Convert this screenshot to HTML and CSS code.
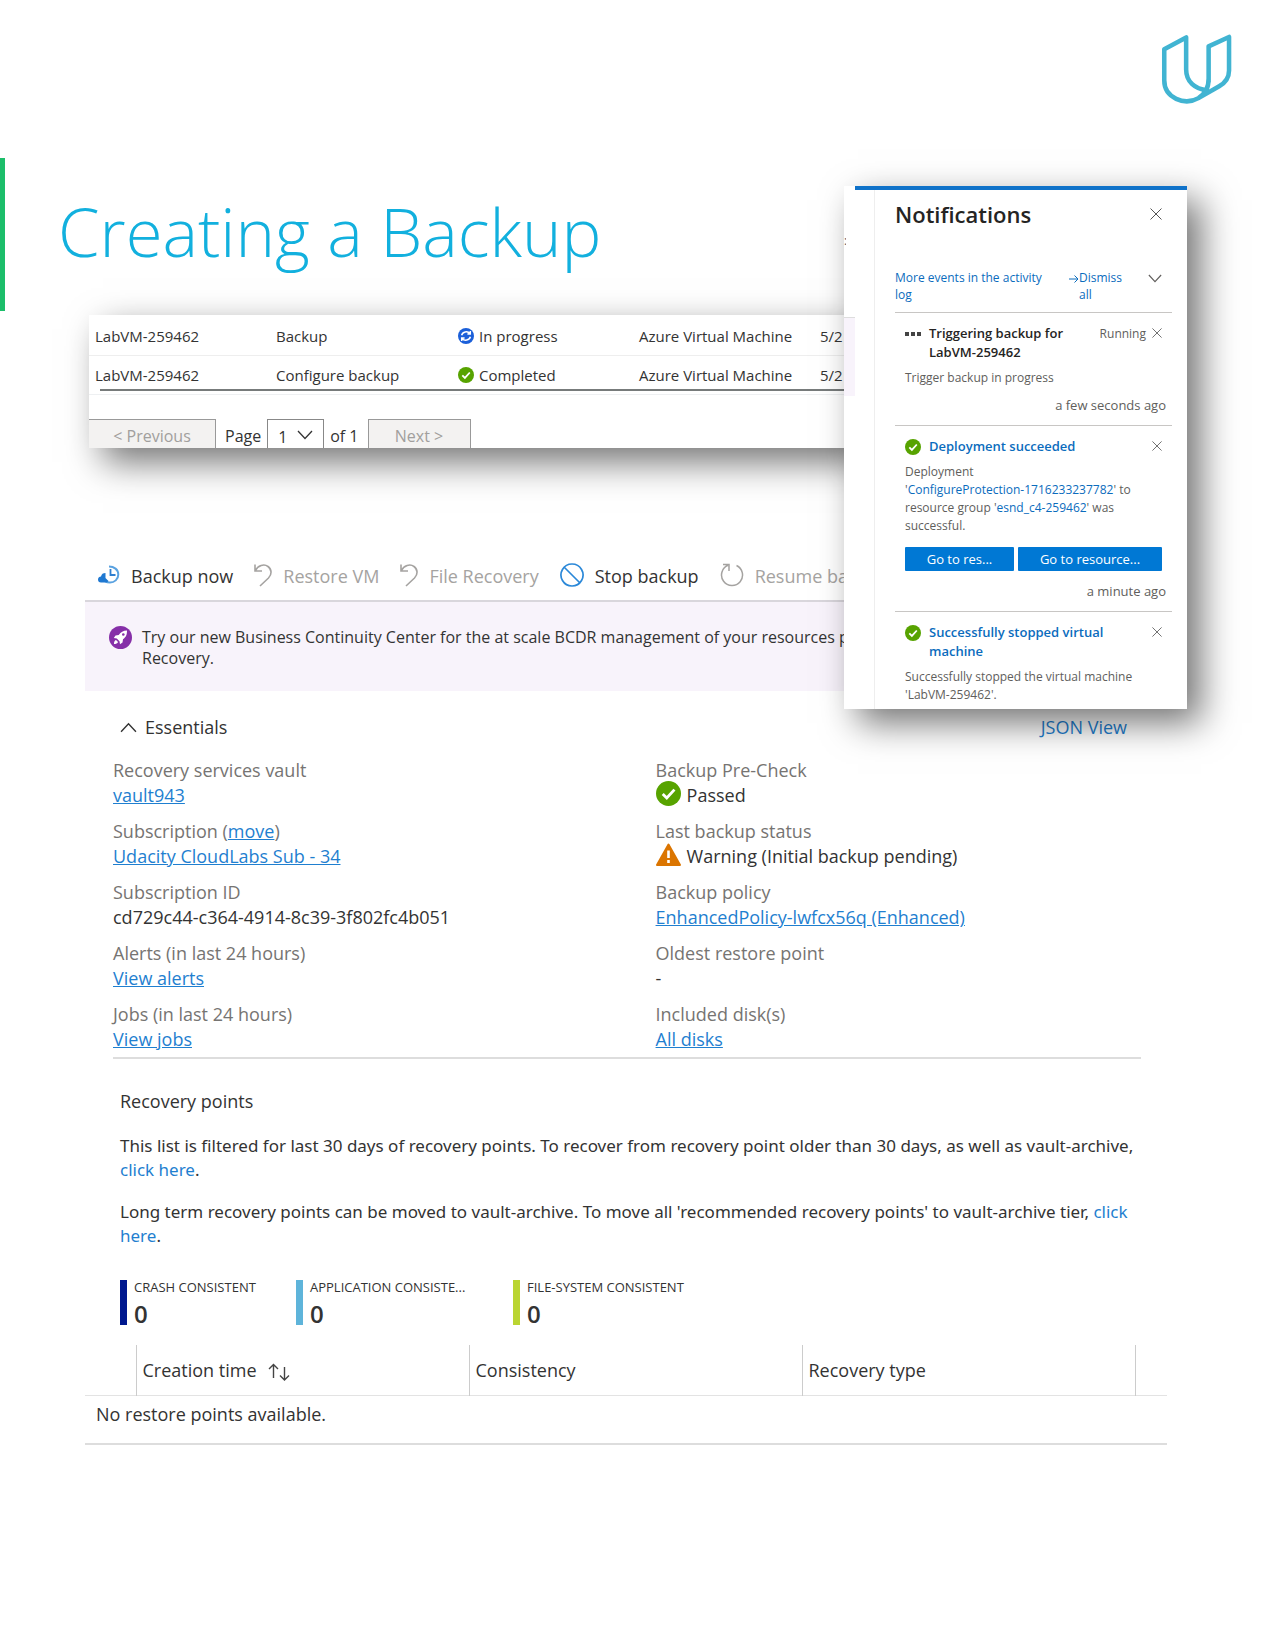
FILE: index.html
```html
<!DOCTYPE html>
<html lang="en">
<head>
<meta charset="utf-8">
<title>Creating a Backup</title>
<meta name="viewport" content="width=device-width, initial-scale=1">
<link rel="stylesheet" href="styles.css">
</head>
<body>
<svg class="sprite" aria-hidden="true">
  <symbol id="check" viewBox="0 0 16 16"><circle cx="8" cy="8" r="8" fill="#57a300"/><path d="M4.3 8.3l2.6 2.6 4.9-5.4" fill="none" stroke="#fff" stroke-width="1.8"/></symbol>
  <symbol id="close" viewBox="0 0 12 12"><path d="M.5.5l11 11M11.5.5l-11 11" fill="none" stroke="currentColor"/></symbol>
  <symbol id="chevron" viewBox="0 0 16 10"><path d="M1 1l7 7.500 7-7.500" fill="none" stroke="currentColor" stroke-width="1.300"/></symbol>
  <symbol id="undo" viewBox="0 0 18 24"><path d="M1 1.500V8h7M1.200 7.800C4 2.500 10 .5 14 3.500c4 3 4 8 .5 11.500L6 23" fill="none" stroke="currentColor" stroke-width="1.600"/></symbol>
</svg>
<div class="page">
  <header class="brand">
    <svg class="logo" viewBox="20 13 72 72" role="img" aria-label="Udacity"><path d="M68.300 62V25.500L89 16V50C89 57 86 62 79 66L58 78C44 86 23.300 78 23.300 60V28.500L45.500 16.500V49C45.500 61 54 69 67 70M68.300 58C68.300 68 65 73 58 78" fill="none" stroke="#41b4d2" stroke-width="4.600" stroke-linejoin="round"/></svg>
  </header>

  <div class="title"><h1>Creating a Backup</h1></div>

  <section class="jobs" aria-label="Backup jobs">
    <table class="jobs-table">
      <tr>
        <td class="c-name">LabVM-259462</td><td class="c-op">Backup</td>
        <td class="c-status"><span class="status"><svg viewBox="0 0 16 16"><circle cx="8" cy="8" r="8" fill="#1b5fd9"/><path d="M3.600 7.200C4.500 3.600 9.500 2.600 12 5.600M12.300 3v3H9.400M12.400 8.800C11.500 12.400 6.500 13.400 4 10.400M3.700 13v-3h2.900" fill="none" stroke="#fff" stroke-width="1.500"/></svg>In progress</span></td>
        <td class="c-type">Azure Virtual Machine</td><td>5/2</td>
      </tr>
      <tr>
        <td>LabVM-259462</td><td>Configure backup</td>
        <td><span class="status"><svg><use href="#check"/></svg>Completed</span></td>
        <td>Azure Virtual Machine</td><td>5/2</td>
      </tr>
    </table>
    <hr class="scroll-line">
    <nav class="pager" aria-label="Pages">
      <button class="pg prev" disabled>&lt; Previous</button>
      <label for="pageno">Page</label>
      <span class="select"><select id="pageno"><option>1</option></select><svg><use href="#chevron"/></svg></span>
      <span class="of">of 1</span>
      <button class="pg next" disabled>Next &gt;</button>
    </nav>
  </section>

  <main class="blade">
    <div class="toolbar">
      <button class="tool"><svg width="23" height="20" viewBox="0 0 23 20"><path d="M12 1.500c5 0 9.300 3 9.300 8 0 5-4 8-8.300 8-2 0-3.500-.4-5-1.400" fill="none" stroke="#5aa2e0" stroke-width="2"/><path d="M13.500 4v6h5" fill="none" stroke="#2f7fd0" stroke-width="1.800"/><path d="M1 14.500c0-2 1.500-3 3-3C4.500 9 6 8 8.500 8v5l3 3c-.5.800-1.500 1.500-3 1.500H4c-2 0-3-1.200-3-3z" fill="#1f78d1"/></svg>Backup now</button>
      <button class="tool" disabled><svg width="18" height="24"><use href="#undo"/></svg>Restore VM</button>
      <button class="tool" disabled><svg width="18" height="24"><use href="#undo"/></svg>File Recovery</button>
      <button class="tool"><svg width="24" height="24" viewBox="0 0 24 24"><path d="M4 4l16 16M12 1a11 11 0 1 0 .01 0z" fill="none" stroke="#2b88d8" stroke-width="1.700"/></svg>Stop backup</button>
      <button class="tool" disabled><svg width="24" height="24" viewBox="0 0 24 24"><path d="M16.500 2.500A10.500 10.500 0 1 1 8 2.300M3 1.500h6V8" fill="none" stroke="currentColor" stroke-width="1.500"/></svg>Resume backup</button>
    </div>

    <div class="banner">
      <svg width="23" height="23" viewBox="0 0 23 23"><circle cx="11.500" cy="11.500" r="11.500" fill="#862fa8"/><path d="M18 4.500c-4 0-6 1.500-8.300 4.500L6.500 9.500 4.800 12l3 .5 2.700 2.700.5 3 2.500-1.700.5-3.200C17 11 18 9 18 4.500zM7 14c-1.500.5-2 2-2 4 2 0 3.500-.5 4-2z" fill="#fff"/><circle cx="14.300" cy="8.500" r="1.300" fill="#862fa8"/></svg>
      <p>Try our new Business Continuity Center for the at scale BCDR management of your resources protected by Azure Backup and Site<br>Recovery.</p>
    </div>

    <section class="essentials">
      <div class="ess-head">
        <button class="toggle" aria-expanded="true"><svg><use href="#chevron"/></svg>Essentials</button>
        <a class="json" href="#json">JSON View</a>
      </div>
      <div class="ess-grid">
        <dl>
          <div><dt>Recovery services vault</dt><dd><a href="#vault">vault943</a></dd></div>
          <div><dt>Subscription (<a href="#move">move</a>)</dt><dd><a href="#sub">Udacity CloudLabs Sub - 34</a></dd></div>
          <div><dt>Subscription ID</dt><dd>cd729c44-c364-4914-8c39-3f802fc4b051</dd></div>
          <div><dt>Alerts (in last 24 hours)</dt><dd><a href="#alerts">View alerts</a></dd></div>
          <div><dt>Jobs (in last 24 hours)</dt><dd><a href="#jobs">View jobs</a></dd></div>
        </dl>
        <dl>
          <div><dt>Backup Pre-Check</dt><dd class="flag"><svg><use href="#check"/></svg>Passed</dd></div>
          <div><dt>Last backup status</dt><dd class="flag"><svg viewBox="0 0 25 25"><path d="M12.500 2.500L24 23H1z" fill="#db7500" stroke="#db7500" stroke-width="2" stroke-linejoin="round"/><path d="M12.500 8.500v7.500M12.500 18v3" stroke="#fff" stroke-width="2.600"/></svg>Warning (Initial backup pending)</dd></div>
          <div><dt>Backup policy</dt><dd><a href="#policy">EnhancedPolicy-lwfcx56q (Enhanced)</a></dd></div>
          <div><dt>Oldest restore point</dt><dd>-</dd></div>
          <div><dt>Included disk(s)</dt><dd><a href="#disks">All disks</a></dd></div>
        </dl>
      </div>
    </section>

    <section class="points">
      <h2>Recovery points</h2>
      <p>This list is filtered for last 30 days of recovery points. To recover from recovery point older than 30 days, as well as vault-archive, <a class="whole" href="#older">click here</a>.</p>
      <p>Long term recovery points can be moved to vault-archive. To move all 'recommended recovery points' to vault-archive tier, <a href="#tier">click here</a>.</p>
      <div class="tiles">
        <div class="tile crash"><span>CRASH CONSISTENT</span><b>0</b></div>
        <div class="tile app"><span>APPLICATION CONSISTE...</span><b>0</b></div>
        <div class="tile file"><span>FILE-SYSTEM CONSISTENT</span><b>0</b></div>
      </div>
    </section>

    <table class="restore">
      <thead><tr>
        <td class="pick"></td>
        <th scope="col">Creation time <svg width="24" height="18" viewBox="0 0 24 18"><path d="M6.500 15V1.500M2 6l4.500-4.500L11 6M17.500 4v13M13 12.500l4.500 4.500 4.500-4.500" fill="none" stroke="#444" stroke-width="1.400"/></svg></th>
        <th scope="col">Consistency</th>
        <th scope="col">Recovery type</th>
        <td class="end"></td>
      </tr></thead>
      <tbody><tr><td colspan="5">No restore points available.</td></tr></tbody>
    </table>
  </main>

  <aside class="notes">
    <div class="under"><span>:</span><i></i></div>
    <div class="panel">
      <div class="panel-head"><h2>Notifications</h2><button class="x big" aria-label="Close"><svg><use href="#close"/></svg></button></div>
      <div class="actions">
        <a class="more" href="#activity">More events in the activity log</a>
        <a class="dismiss" href="#dismiss"><svg width="10" height="8" viewBox="0 0 10 8"><path d="M0 4h9M5.500.5L9 4 5.500 7.500" fill="none" stroke="currentColor"/></svg><span>Dismiss all</span></a>
        <button class="expand" aria-label="Expand"><svg><use href="#chevron"/></svg></button>
      </div>
      <article>
        <div class="note-head"><svg width="16" height="16" viewBox="0 0 16 16"><path d="M0 6h4v4H0zM6 6h4v4H6zM12 6h4v4h-4z" fill="#444"/></svg><h3>Triggering backup for LabVM-259462</h3><span class="state">Running</span><button class="x" aria-label="Dismiss"><svg><use href="#close"/></svg></button></div>
        <p>Trigger backup in progress</p>
        <time>a few seconds ago</time>
      </article>
      <article>
        <div class="note-head"><svg width="16" height="16"><use href="#check"/></svg><h3><a href="#deployment">Deployment succeeded</a></h3><button class="x" aria-label="Dismiss"><svg><use href="#close"/></svg></button></div>
        <p>Deployment<br>'<a href="#protection">ConfigureProtection-1716233237782</a>' to resource group '<a href="#group">esnd_c4-259462</a>' was successful.</p>
        <div class="go"><button>Go to res...</button><button>Go to resource...</button></div>
        <time>a minute ago</time>
      </article>
      <article>
        <div class="note-head"><svg width="16" height="16"><use href="#check"/></svg><h3><a href="#stopped">Successfully stopped virtual machine</a></h3><button class="x" aria-label="Dismiss"><svg><use href="#close"/></svg></button></div>
        <p>Successfully stopped the virtual machine 'LabVM-259462'.</p>
      </article>
    </div>
  </aside>
</div>
</body>
</html>
```
FILE: styles.css
```css
* { box-sizing: border-box; }

body {
  margin: 0;
  background: #fff;
  color: #333;
  font: 16px/24px "Open Sans", "Noto Sans", sans-serif;
}

h1, h2, h3, p, dl, dd { margin: 0; }
a { color: #1f7fd0; text-decoration: none; }
button { padding: 0; border: 0; background: none; color: inherit; font: inherit; }
svg { flex: none; }
table { border-collapse: collapse; }
.sprite { position: absolute; width: 0; height: 0; }

.page { position: relative; padding-bottom: 200px; }

.brand { display: flex; justify-content: flex-end; padding: 34px 43px 0; }
.logo { width: 71px; height: 71px; }

.title {
  margin-top: 53px;
  padding: 33px 0 40px 53px;
  border-left: 5px solid #1cbe6a;
}
.title h1 { color: #12b0de; font-size: 67px; line-height: 80px; font-weight: 300; }

/* jobs list */
.jobs {
  margin: 4px 420px 0 89px;
  overflow: hidden;
  background: #fff;
  box-shadow: 14px 14px 34px rgba(0, 0, 0, .55);
}
.jobs-table { width: 100%; table-layout: fixed; font-size: 15px; line-height: 22px; white-space: nowrap; }
.jobs-table td { padding: 8px 0 3px; }
.jobs-table tr:first-child td { padding-top: 10px; padding-bottom: 8px; border-bottom: 1px solid #eee; }
.jobs-table tr td:first-child { padding-left: 6px; }
.jobs-table .c-name { width: 187px; }
.jobs-table .c-op { width: 182px; }
.jobs-table .c-status { width: 181px; }
.jobs-table .c-type { width: 181px; }
.status { display: flex; align-items: center; gap: 5px; }
.status svg { width: 16px; height: 16px; }
.scroll-line { height: 2px; margin: 0 0 3px 11px; border: 0; background: #777b7b; }
.pager {
  display: flex;
  align-items: flex-start;
  height: 54px;
  padding-top: 24px;
  border-top: 1px solid #eef0f2;
  line-height: 34px;
}
.pg { height: 34px; border: 1px solid #999; background: #f3f2f1; color: #a19f9d; line-height: 30px; }
.prev { width: 127px; border-left: 0; }
.next { width: 103px; margin-left: 9px; }
.pager label { margin: 0 6px 0 9px; }
.select { display: flex; align-items: center; width: 57px; height: 34px; border: 1px solid #888; }
.select select { flex: 1; width: 20px; height: 32px; padding: 0 0 0 10px; border: 0; appearance: none; background: none; color: inherit; font: inherit; }
.select svg { width: 16px; height: 10px; margin: 0 10px 2px 0; }
.of { margin-left: 6px; }

/* vault item blade */
.blade { margin: 102px 108px 0 85px; font-size: 18px; }
.toolbar { display: flex; gap: 21px; height: 50px; padding: 2px 0 0 12px; align-items: center; overflow: hidden; white-space: nowrap; }
.tool { display: flex; align-items: center; gap: 11px; }
.tool:disabled { color: #a5a3a1; }
.tool svg { margin-bottom: 3px; }

.banner {
  display: flex;
  gap: 10px;
  padding: 24px 0 22px 24px;
  border-top: 2px solid #d9d6dc;
  background: #f8f3fb;
  font-size: 16px;
  line-height: 21px;
  white-space: nowrap;
  overflow: hidden;
}
.banner p { margin-top: 1px; }

.essentials { margin: 24px 26px 0 28px; border-bottom: 2px solid #ddd; padding-bottom: 5px; }
.ess-head { display: flex; justify-content: space-between; padding: 0 14px 0 7px; }
.toggle { display: flex; align-items: center; gap: 8px; font-weight: 500; }
.toggle svg { width: 17px; height: 11px; transform: rotate(180deg); }
.ess-grid { display: grid; grid-template-columns: 19fr 17fr; margin-top: 19px; line-height: 25px; }
.ess-grid dl { display: grid; gap: 11px; }
.ess-grid dt { color: #767472; }
.ess-grid a { text-decoration: underline; }
.flag { display: flex; gap: 6px; height: 25px; }
.flag svg { width: 25px; height: 25px; margin-top: -2px; }

.points { margin: 30px 0 0 35px; }
.points h2 { font-size: 18px; line-height: 24px; font-weight: 400; margin-bottom: 21px; }
.points p { margin-bottom: 18px; font-family: "Noto Sans", "Open Sans", sans-serif; font-size: 17px; }
.whole { white-space: nowrap; }
.tiles { display: flex; margin-top: 32px; }
.tile { height: 45px; padding-left: 7px; border-left: 7px solid; font-size: 13px; line-height: 15px; }
.tile span { display: block; color: #333; }
.tile b { display: block; color: #333; font-size: 24px; line-height: 38px; font-weight: 600; }
.crash { width: 176px; border-color: #00188f; }
.app { width: 217px; border-color: #5eb4da; }
.file { border-color: #bad532; }

.restore { width: 100%; margin-top: 20px; table-layout: fixed; text-align: left; border-bottom: 2px solid #ddd; }
.restore thead { border-bottom: 1px solid #e3e3e3; }
.restore thead td, .restore th { height: 50px; padding: 0; }
.restore th { padding-left: 6px; border-left: 1px solid #ccc; font-weight: 500; }
.restore th svg { margin-left: 6px; vertical-align: -4px; }
.restore .pick { width: 51px; }
.restore .end { width: 32px; border-left: 1px solid #ccc; }
.restore tbody td { padding: 6px 11px 17px; }

/* notifications flyout, floating over the page */
.notes {
  position: absolute;
  top: 186px;
  right: 88px;
  display: flex;
  width: 343px;
  background: #fff;
  box-shadow: 14px 14px 34px rgba(0, 0, 0, .55);
  color: #605e5c;
  font-size: 12px;
  line-height: 18px;
}
.notes a { color: #0b6cbd; }
.under { width: 11px; padding-top: 46px; overflow: hidden; }
.under span { display: block; width: 2px; height: 20px; overflow: hidden; }
.under i { display: block; height: 79px; margin-top: 65px; border-top: 1px solid #ddd; background: #f8f3fb; }
.panel {
  flex: 1;
  min-width: 0;
  padding: 0 15px 5px 40px;
  border-top: 4px solid #0f72c9;
  background: linear-gradient(#eee, #eee) 19px 0 / 1px 100% no-repeat;
}
.panel-head { display: flex; align-items: center; justify-content: space-between; height: 48px; padding-right: 10px; color: #252423; }
.panel-head h2 { font-size: 22px; line-height: 30px; font-weight: 600; }
.x { display: flex; color: #555; }
.x svg { width: 10px; height: 10px; }
.big svg { width: 12px; height: 12px; }
.actions { display: flex; align-items: flex-start; padding: 31px 10px 9px 0; line-height: 17px; }
.more { width: 174px; padding-right: 14px; }
.dismiss { display: flex; flex: 1; }
.dismiss span { width: 50px; }
.dismiss svg { margin-top: 6px; }
.expand svg { display: block; width: 14px; height: 9px; margin-top: 5px; }
article { padding: 11px 6px 11px 10px; border-top: 1px solid #c8c6c4; }
article:last-child { padding-bottom: 0; }
.note-head { display: flex; align-items: flex-start; gap: 8px; margin-bottom: 7px; padding-right: 4px; line-height: 19px; }
.note-head h3 { flex: 1; color: #252423; font-size: 13px; line-height: 19px; font-weight: 600; }
.note-head > svg { margin-top: 2px; }
.note-head .x { margin-top: 4px; }
.state { margin-right: -2px; }
time { display: block; margin-top: 9px; font-size: 13px; text-align: right; }
.go { display: flex; gap: 4px; margin: 12px 4px 11px 0; }
.go button { flex: 109; height: 24px; border-radius: 1px; background: #0078d4; color: #fff; font-size: 13px; }
.go button + button { flex: 144; }
```
